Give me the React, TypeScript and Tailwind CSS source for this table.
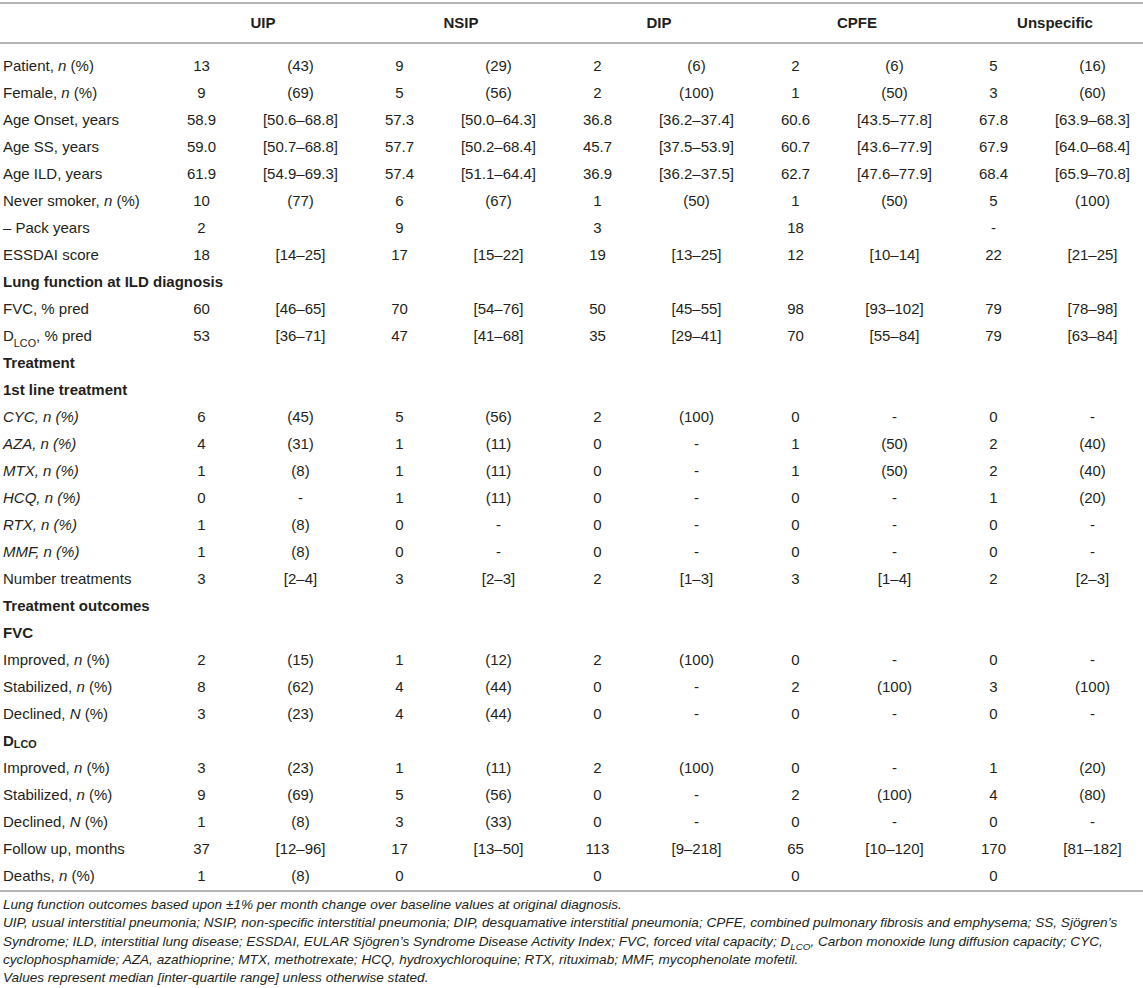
import React from "react";

type Row =
  | { kind: "section"; label: React.ReactNode }
  | { kind: "data"; label: React.ReactNode; values: string[] };

const n = <i>n</i>;
const DLCO = (
  <>
    D<sub className="text-[0.72em] align-[-0.25em]">LCO</sub>
  </>
);

const rows: Row[] = [
  { kind: "data", label: <>Patient, {n} (%)</>, values: ["13", "(43)", "9", "(29)", "2", "(6)", "2", "(6)", "5", "(16)"] },
  { kind: "data", label: <>Female, {n} (%)</>, values: ["9", "(69)", "5", "(56)", "2", "(100)", "1", "(50)", "3", "(60)"] },
  { kind: "data", label: "Age Onset, years", values: ["58.9", "[50.6–68.8]", "57.3", "[50.0–64.3]", "36.8", "[36.2–37.4]", "60.6", "[43.5–77.8]", "67.8", "[63.9–68.3]"] },
  { kind: "data", label: "Age SS, years", values: ["59.0", "[50.7–68.8]", "57.7", "[50.2–68.4]", "45.7", "[37.5–53.9]", "60.7", "[43.6–77.9]", "67.9", "[64.0–68.4]"] },
  { kind: "data", label: "Age ILD, years", values: ["61.9", "[54.9–69.3]", "57.4", "[51.1–64.4]", "36.9", "[36.2–37.5]", "62.7", "[47.6–77.9]", "68.4", "[65.9–70.8]"] },
  { kind: "data", label: <>Never smoker, {n} (%)</>, values: ["10", "(77)", "6", "(67)", "1", "(50)", "1", "(50)", "5", "(100)"] },
  { kind: "data", label: "– Pack years", values: ["2", "", "9", "", "3", "", "18", "", "-", ""] },
  { kind: "data", label: "ESSDAI score", values: ["18", "[14–25]", "17", "[15–22]", "19", "[13–25]", "12", "[10–14]", "22", "[21–25]"] },
  { kind: "section", label: "Lung function at ILD diagnosis" },
  { kind: "data", label: "FVC, % pred", values: ["60", "[46–65]", "70", "[54–76]", "50", "[45–55]", "98", "[93–102]", "79", "[78–98]"] },
  { kind: "data", label: <>{DLCO}, % pred</>, values: ["53", "[36–71]", "47", "[41–68]", "35", "[29–41]", "70", "[55–84]", "79", "[63–84]"] },
  { kind: "section", label: "Treatment" },
  { kind: "section", label: "1st line treatment" },
  { kind: "data", label: <i>CYC, n (%)</i>, values: ["6", "(45)", "5", "(56)", "2", "(100)", "0", "-", "0", "-"] },
  { kind: "data", label: <i>AZA, n (%)</i>, values: ["4", "(31)", "1", "(11)", "0", "-", "1", "(50)", "2", "(40)"] },
  { kind: "data", label: <i>MTX, n (%)</i>, values: ["1", "(8)", "1", "(11)", "0", "-", "1", "(50)", "2", "(40)"] },
  { kind: "data", label: <i>HCQ, n (%)</i>, values: ["0", "-", "1", "(11)", "0", "-", "0", "-", "1", "(20)"] },
  { kind: "data", label: <i>RTX, n (%)</i>, values: ["1", "(8)", "0", "-", "0", "-", "0", "-", "0", "-"] },
  { kind: "data", label: <i>MMF, n (%)</i>, values: ["1", "(8)", "0", "-", "0", "-", "0", "-", "0", "-"] },
  { kind: "data", label: "Number treatments", values: ["3", "[2–4]", "3", "[2–3]", "2", "[1–3]", "3", "[1–4]", "2", "[2–3]"] },
  { kind: "section", label: "Treatment outcomes" },
  { kind: "section", label: "FVC" },
  { kind: "data", label: <>Improved, {n} (%)</>, values: ["2", "(15)", "1", "(12)", "2", "(100)", "0", "-", "0", "-"] },
  { kind: "data", label: <>Stabilized, {n} (%)</>, values: ["8", "(62)", "4", "(44)", "0", "-", "2", "(100)", "3", "(100)"] },
  { kind: "data", label: <>Declined, <i>N</i> (%)</>, values: ["3", "(23)", "4", "(44)", "0", "-", "0", "-", "0", "-"] },
  { kind: "section", label: DLCO },
  { kind: "data", label: <>Improved, {n} (%)</>, values: ["3", "(23)", "1", "(11)", "2", "(100)", "0", "-", "1", "(20)"] },
  { kind: "data", label: <>Stabilized, {n} (%)</>, values: ["9", "(69)", "5", "(56)", "0", "-", "2", "(100)", "4", "(80)"] },
  { kind: "data", label: <>Declined, <i>N</i> (%)</>, values: ["1", "(8)", "3", "(33)", "0", "-", "0", "-", "0", "-"] },
  { kind: "data", label: "Follow up, months", values: ["37", "[12–96]", "17", "[13–50]", "113", "[9–218]", "65", "[10–120]", "170", "[81–182]"] },
  { kind: "data", label: <>Deaths, {n} (%)</>, values: ["1", "(8)", "0", "", "0", "", "0", "", "0", ""] },
];

const groups = ["UIP", "NSIP", "DIP", "CPFE", "Unspecific"];

function TableRow({ row }: { row: Row }) {
  if (row.kind === "section") {
    return (
      <div className="h-[27px] flex items-center pl-[3px] font-bold whitespace-nowrap">
        {row.label}
      </div>
    );
  }
  return (
    <div className="grid grid-cols-[152px_repeat(10,99px)] h-[27px] items-center">
      <div className="pl-[3px] whitespace-nowrap">{row.label}</div>
      {row.values.map((v, i) => (
        <div key={i} className="text-center whitespace-nowrap">
          {v}
        </div>
      ))}
    </div>
  );
}

export default function App() {
  return (
    <div className="w-[1143px] h-[988px] bg-white overflow-hidden text-[15px] text-[#231f20] font-['Liberation_Sans',Arial,sans-serif]">
      <div className="mt-[2px] border-t-2 border-b-2 border-[#b4b4b4] h-[42px] grid grid-cols-[152px_repeat(5,198px)] items-center">
        <div />
        {groups.map((g) => (
          <div key={g} className="text-center font-bold pl-[24px] whitespace-nowrap">
            {g}
          </div>
        ))}
      </div>
      <div className="pt-[9px] border-b-2 border-[#b4b4b4]">
        {rows.map((r, i) => (
          <TableRow key={i} row={r} />
        ))}
      </div>
      <div className="pt-[4px] pl-[3px] text-[13.6px] leading-[18.3px] italic whitespace-nowrap">
        <p>Lung function outcomes based upon ±1% per month change over baseline values at original diagnosis.</p>
        <p>
          UIP, usual interstitial pneumonia; NSIP, non-specific interstitial pneumonia; DIP, desquamative interstitial pneumonia; CPFE, combined pulmonary fibrosis and emphysema; SS, Sjögren’s
        </p>
        <p>
          Syndrome; ILD, interstitial lung disease; ESSDAI, EULAR Sjögren’s Syndrome Disease Activity Index; FVC, forced vital capacity; {DLCO}, Carbon monoxide lung diffusion capacity; CYC,
        </p>
        <p>cyclophosphamide; AZA, azathioprine; MTX, methotrexate; HCQ, hydroxychloroquine; RTX, rituximab; MMF, mycophenolate mofetil.</p>
        <p>Values represent median [inter-quartile range] unless otherwise stated.</p>
      </div>
    </div>
  );
}
